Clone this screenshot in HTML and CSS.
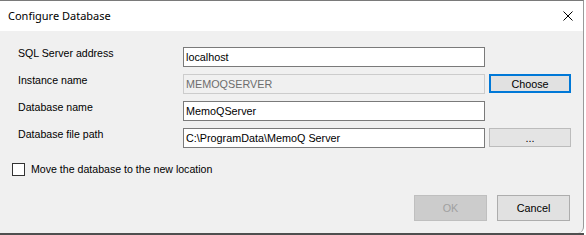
FILE: index.html
```html
<!DOCTYPE html>
<html lang="en">
  <head>
    <meta charset="UTF-8" />
    <title>Configure Database</title>
    <link rel="stylesheet" href="styles.css">
  </head>

  <body>
    <div class="window">
      <div class="titlebar">
        <span class="title">Configure Database</span>
        <svg class="close" width="10" height="10" viewBox="0 0 10 10">
          <path d="M0.5 0.5 L9.5 9.5 M9.5 0.5 L0.5 9.5" stroke="#000" stroke-width="1" fill="none" />
        </svg>
      </div>
      <div class="client">
        <div class="form">
          <label class="label">SQL Server address</label>
          <input class="field" type="text" value="localhost">
          <span></span>

          <label class="label">Instance name</label>
          <input class="field" type="text" value="MEMOQSERVER" disabled>
          <button class="btn focused">Choose</button>

          <label class="label">Database name</label>
          <input class="field" type="text" value="MemoQServer">
          <span></span>

          <label class="label">Database file path</label>
          <input class="field" type="text" value="C:\ProgramData\MemoQ Server">
          <button class="btn light">...</button>
        </div>

        <label class="check">
          <span class="box"></span>
          Move the database to the new location
        </label>

        <div class="actions">
          <button class="btn big" disabled>OK</button>
          <button class="btn big">Cancel</button>
        </div>
      </div>
    </div>
    <div class="under"></div>
  </body>
</html>
```

FILE: styles.css
```css
body {
  margin: 0;
  padding: 0;
  width: 586px;
  height: 235px;
  background: #fff;
  overflow: hidden;
  font-family: "Liberation Sans", Arial, sans-serif;
  font-size: 10.6px;
  color: #000;
}

.window {
  width: 583px;
  height: 232px;
  border-top: 1px solid #7a7a7a;
  border-right: 1px solid #9a9a9a;
  border-bottom-right-radius: 6px;
  background: #f0f0f0;
  display: flex;
  flex-direction: column;
  overflow: hidden;
}

.under {
  width: 584px;
  height: 2px;
  background: #4f4f4f;
}

.titlebar {
  height: 30px;
  background: #fff;
  display: flex;
  align-items: center;
  justify-content: space-between;
  padding: 0 10px 0 8px;
}

.title {
  font-family: "Noto Sans", sans-serif;
  font-size: 11px;
  margin-top: -1px;
}

.close {
  margin-top: -1px;
}

.client {
  flex: 1;
  padding: 16px 13px 0 12px;
  display: flex;
  flex-direction: column;
}

.form {
  display: grid;
  grid-template-columns: 167px 302px 82px;
  grid-auto-rows: 20px;
  column-gap: 4px;
  row-gap: 7px;
}

.label {
  padding-left: 6px;
  line-height: 13px;
  align-self: start;
}

.field {
  box-sizing: border-box;
  height: 20px;
  margin: 0;
  padding: 0 2px;
  border: 1px solid #7a7a7a;
  background: #fff;
  font-family: "Liberation Sans", Arial, sans-serif;
  font-size: 10.8px;
  color: #000;
  outline: none;
}

.field:disabled {
  background: #f0f0f0;
  border-color: #cccccc;
  color: #6d6d6d;
}

.btn {
  box-sizing: border-box;
  margin: 0;
  padding: 0;
  height: 19px;
  background: #e1e1e1;
  border: 1px solid #adadad;
  font-family: "Liberation Sans", Arial, sans-serif;
  font-size: 10.8px;
  color: #000;
}

.btn.focused {
  border: 2px solid #0078d7;
}

.btn.light {
  border-color: #bcbcbc;
  background: #e4e4e4;
}

.check {
  display: flex;
  align-items: center;
  gap: 6px;
  margin-top: 15px;
  height: 13px;
  line-height: 13px;
}

.box {
  box-sizing: border-box;
  width: 13px;
  height: 13px;
  border: 1px solid #333;
  background: #fff;
}

.actions {
  display: flex;
  justify-content: flex-end;
  gap: 10px;
  margin-top: 19px;
}

.btn.big {
  width: 73px;
  height: 26px;
}

.btn.big:disabled {
  background: #cccccc;
  border-color: #bfbfbf;
  color: #a0a0a0;
}
```
